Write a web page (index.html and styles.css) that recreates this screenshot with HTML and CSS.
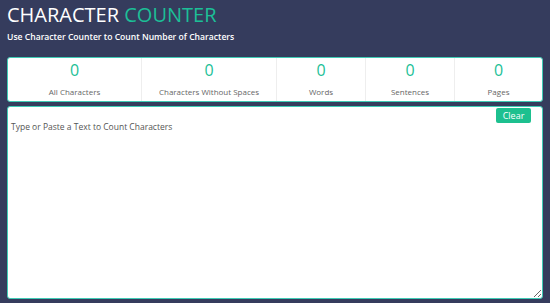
FILE: index.html
```html
<!DOCTYPE html>
<html lang="en">
<head>
    <meta charset="UTF-8">
    <meta name="viewport" content="width=device-width, initial-scale=1.0">
    <title>Character Counter</title>
    <link rel="stylesheet" href="styles.css">
</head>
<body>
    <div class="page">
        <h1 class="title">CHARACTER <span class="accent">COUNTER</span></h1>
        <p class="subtitle">Use Character Counter to Count Number of Characters</p>

        <div class="stats">
            <div class="stat">
                <span class="stat-value" id="allChars">0</span>
                <span class="stat-label">All Characters</span>
            </div>
            <div class="stat">
                <span class="stat-value" id="noSpaces">0</span>
                <span class="stat-label">Characters Without Spaces</span>
            </div>
            <div class="stat">
                <span class="stat-value" id="words">0</span>
                <span class="stat-label">Words</span>
            </div>
            <div class="stat">
                <span class="stat-value" id="sentences">0</span>
                <span class="stat-label">Sentences</span>
            </div>
            <div class="stat">
                <span class="stat-value" id="pages">0</span>
                <span class="stat-label">Pages</span>
            </div>
        </div>

        <div class="editor">
            <textarea id="text" class="text-input" placeholder="Type or Paste a Text to Count Characters"></textarea>
            <button class="clear-btn" id="clearBtn">Clear</button>
        </div>
    </div>

    <script>
        const text = document.getElementById('text');

        function update() {
            const value = text.value;
            const words = value.trim() ? value.trim().split(/\s+/).length : 0;
            const sentences = (value.match(/[^.!?]+[.!?]+/g) || []).length;
            document.getElementById('allChars').textContent = value.length;
            document.getElementById('noSpaces').textContent = value.replace(/\s/g, '').length;
            document.getElementById('words').textContent = words;
            document.getElementById('sentences').textContent = sentences;
            document.getElementById('pages').textContent = Math.ceil(words / 275);
        }

        text.addEventListener('input', update);
        document.getElementById('clearBtn').addEventListener('click', function() {
            text.value = '';
            update();
        });
    </script>
</body>
</html>
```

FILE: styles.css
```css
body {
    margin: 0;
    background: #353c5d;
    font-family: "Open Sans", "Noto Sans", sans-serif;
}

.page {
    padding: 0 7px 0 7px;
}

.title {
    margin: 0;
    padding-top: 2px;
    font-size: 20px;
    font-weight: 400;
    line-height: 26px;
    color: #ffffff;
}

.accent {
    color: #1cbf97;
}

.subtitle {
    margin: 0;
    padding-top: 3px;
    font-size: 8.6px;
    font-weight: 600;
    line-height: 13px;
    color: #ffffff;
}

.stats {
    margin-top: 13px;
    display: grid;
    grid-template-columns: 133px 135px 89px 89px 1fr;
    background: #ffffff;
    border: 1px solid #3fcbb5;
    border-radius: 3px;
    height: 43px;
}

.stat {
    display: flex;
    flex-direction: column;
    align-items: center;
    border-left: 1px solid #eeeeee;
}

.stat:first-child {
    border-left: none;
}

.stat-value {
    font-size: 16px;
    line-height: 20px;
    margin-top: 2px;
    color: #1cbf97;
}

.stat-label {
    font-size: 8px;
    line-height: 11px;
    margin-top: 6px;
    color: #666666;
}

.editor {
    position: relative;
    margin-top: 4px;
}

.text-input {
    display: block;
    box-sizing: border-box;
    width: 100%;
    height: 193px;
    margin: 0;
    padding: 14px 3px;
    border: 1px solid #3fcbb5;
    border-radius: 3px;
    font-family: "Open Sans", "Noto Sans", sans-serif;
    font-size: 8.5px;
    color: #444444;
    outline: none;
}

.text-input::placeholder {
    color: #555555;
}

.clear-btn {
    position: absolute;
    top: 2px;
    right: 12px;
    width: 35px;
    height: 15px;
    padding: 0;
    border: none;
    border-radius: 2px;
    background: #1dc08f;
    color: #ffffff;
    font-family: "Open Sans", "Noto Sans", sans-serif;
    font-size: 9px;
    line-height: 15px;
    cursor: pointer;
}
```
